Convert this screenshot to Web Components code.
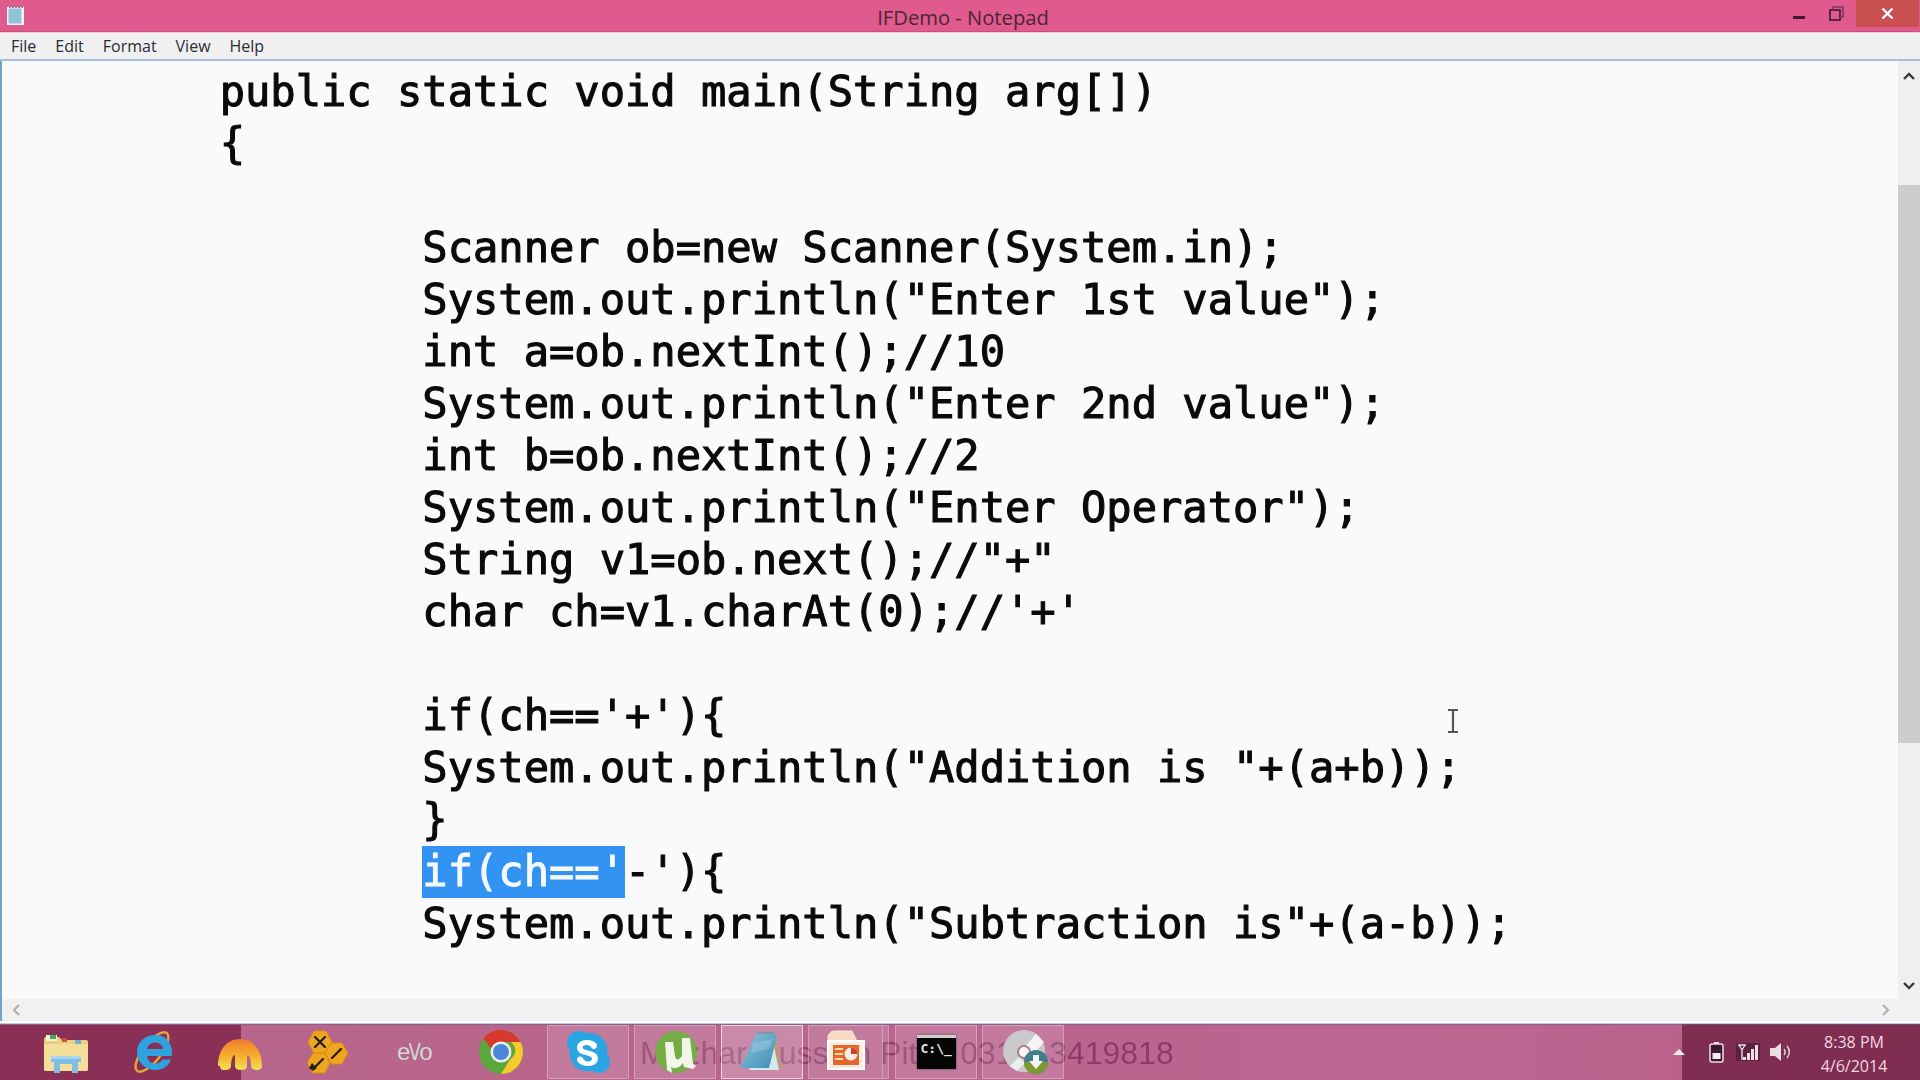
<!DOCTYPE html>
<html><head><meta charset="utf-8"><title>IFDemo - Notepad</title>
<style>
html,body{margin:0;padding:0;width:1920px;height:1080px;overflow:hidden;background:#fafafa}
body{display:flex;flex-direction:column;font-family:"Open Sans","Liberation Sans",sans-serif}
</style></head><body>
<np-window>
  <np-titlebar slot="title">IFDemo - Notepad</np-titlebar>
  <np-menubar slot="menu"><np-menu>File</np-menu><np-menu>Edit</np-menu><np-menu>Format</np-menu><np-menu>View</np-menu><np-menu>Help</np-menu></np-menubar>
  <np-editor slot="editor">
    <code-line indent="1">public static void main(String arg[])</code-line>
    <code-line indent="1">{</code-line>
    <code-line></code-line>
    <code-line indent="2">Scanner ob=new Scanner(System.in);</code-line>
    <code-line indent="2">System.out.println("Enter 1st value");</code-line>
    <code-line indent="2">int a=ob.nextInt();//10</code-line>
    <code-line indent="2">System.out.println("Enter 2nd value");</code-line>
    <code-line indent="2">int b=ob.nextInt();//2</code-line>
    <code-line indent="2">System.out.println("Enter Operator");</code-line>
    <code-line indent="2">String v1=ob.next();//"+"</code-line>
    <code-line indent="2">char ch=v1.charAt(0);//'+'</code-line>
    <code-line></code-line>
    <code-line indent="2">if(ch=='+'){</code-line>
    <code-line indent="2">System.out.println("Addition is "+(a+b));</code-line>
    <code-line indent="2">}</code-line>
    <code-line indent="2"><sel-text>if(ch=='</sel-text>-'){</code-line>
    <code-line indent="2">System.out.println("Subtraction is"+(a-b));</code-line>
  </np-editor>
</np-window>
<np-taskbar>
  <task-btn plain icon="explorer"></task-btn>
  <task-btn plain icon="ie"></task-btn>
  <task-btn plain icon="arch"></task-btn>
  <task-btn plain icon="honey"></task-btn>
  <task-btn plain icon="evo"></task-btn>
  <task-btn plain icon="chrome"></task-btn>
  <task-btn icon="skype"></task-btn>
  <task-btn icon="utorrent"></task-btn>
  <task-btn active icon="notepad"></task-btn>
  <task-btn stacked icon="ppt"></task-btn>
  <task-btn icon="cmd"></task-btn>
  <task-btn icon="disk"></task-btn>
  <np-tray slot="tray"></np-tray>
</np-taskbar>
<script>
const ICONS={
explorer:`<svg width="46" height="46" viewBox="0 0 46 46"><path d="M2 8h14l3 3h24a2 2 0 0 1 2 2v27a2 2 0 0 1-2 2H3a2 2 0 0 1-2-2V10z" fill="#e9cf7e"/><path d="M1 15h44v25a2 2 0 0 1-2 2H3a2 2 0 0 1-2-2z" fill="#f3df9a"/><path d="M3 6h11v6H3z" fill="#f5f0d8"/><rect x="7" y="6" width="6" height="4" fill="#3fae5a"/><rect x="19" y="9" width="5" height="4" fill="#c4553a"/><rect x="32" y="11" width="6" height="4" fill="#6fb2cf"/><path d="M8 27h30v6h-3v11h-6v-9H17v9h-6V33H8z" fill="#7fbde2"/><path d="M8 27h30v3H8z" fill="#a9d6ef"/></svg>`,
ie:`<svg width="46" height="46" viewBox="0 0 46 46"><ellipse cx="22" cy="23" rx="24" ry="9" transform="rotate(-52 22 23)" fill="none" stroke="#dfa83a" stroke-width="2.4"/><path d="M37 27H17c.6 5 4 7.500 8 7.500 3.500 0 6-1.500 7.500-4H41c-2.500 6.500-8.500 10.500-15.500 10.500C15 41 7 33 7 23S15 6 25.500 6 42 14 42 24c0 1-.1 2-.3 3zM17 20h16c-.6-4-3.600-6.500-8-6.500-3.800 0-7 2.500-8 6.500z" fill="#2da4e0" fill-rule="evenodd"/></svg>`,
arch:`<svg width="46" height="46" viewBox="0 0 46 46"><defs><linearGradient id="ag" x1="0" y1="0" x2="0" y2="1"><stop offset="0" stop-color="#ee7a30"/><stop offset=".55" stop-color="#f6b02c"/><stop offset="1" stop-color="#f2e05a"/></linearGradient></defs><path d="M1 37C1 21 10 10 23 10s22 11 22 27c0 2.500-2 4-5 4s-6-1.500-6-4c0-5-1-9-3-11 0 0-1 0-1 2v9c0 2.500-2 4-6 4s-6-1.500-6-4v-9c0-2-1-2-1-2-2 2-3 6-3 11 0 2.500-2 4-6 4s-5-1.500-5-4z" fill="url(#ag)"/></svg>`,
honey:`<svg width="46" height="46" viewBox="0 0 46 46"><g fill="#efa51f" stroke="#d98a14" stroke-width="1"><path d="M10 2h12l6 11-6 11H10L4 13z"/><path d="M27 14h11l6 10-6 11H27l-6-11z"/><path d="M9 24h12l5 10-5 10H9L3 34z"/></g><g stroke="#2b2115" stroke-width="2.400" fill="none" stroke-linecap="round"><path d="M11 8l10 10M21 8L11 18"/><path d="M28 29l9-9"/><path d="M19 30l-7 7"/></g><path d="M8 34l5 5-4 3-4-3z" fill="#2b2115"/></svg>`,
chrome:`<svg width="46" height="46" viewBox="0 0 46 46"><circle cx="23" cy="23" r="22" fill="#5aa83c"/><path d="M23 1a22 22 0 0 1 19.500 12H23a10 10 0 0 0-9.500 7L5.500 9.500A22 22 0 0 1 23 1z" fill="#d8382e"/><path d="M42.500 13A22 22 0 0 1 23 45l9.500-15a10 10 0 0 0 0-17z" fill="#f6c92c"/><circle cx="23" cy="23" r="10.500" fill="#eee"/><circle cx="23" cy="23" r="8" fill="#4b86d8"/></svg>`,
skype:`<svg width="46" height="46" viewBox="-1 0 46 46"><path d="M13 2c3 0 5 1 7 2 8-1 14 2 18 7 3 4 4 9 3 14 2 3 3 5 3 8 0 6-5 11-11 11-3 0-5-1-7-2-8 1-15-1-19-7-3-4-4-9-3-13C2 19 1 17 1 14 1 7 6 2 13 2z" fill="#2aa5e4"/><path d="M32 29c0 6-5 8-10 8-6 0-11-3-11-6.500 0-2 1.500-3 3-3 3.500 0 3 5 8 5 2.500 0 4-1.200 4-2.800 0-4.700-15-2.200-15-11.200 0-5 5-7.500 10-7.500 5.500 0 10 2.500 10 6 0 1.800-1.500 3-3 3-3 0-2.800-4-7.500-4-2.500 0-3.800 1.200-3.800 2.500 0 4 15.300 2 15.300 11z" fill="#fff"/></svg>`,
utorrent:`<svg width="46" height="46" viewBox="-2 0 46 46"><circle cx="22" cy="23" r="21" fill="#74ad44"/><path d="M11 13h8l2 14c.4 3 2 4 4 3 2-1 3-3 3-5V9h8l3 26 3 2-3 3-9-2-1-4c-2 3-5 5-8 5-2 0-3-.5-4-1.500L18 44l-5-3z" fill="#f2f6ea"/></svg>`,
notepad:`<svg width="46" height="46" viewBox="0 0 46 46"><defs><linearGradient id="ng" x1="0" y1="0" x2="1" y2="1"><stop offset="0" stop-color="#8fc6de"/><stop offset="1" stop-color="#3f8db5"/></linearGradient></defs><path d="M36 4l6 36-12 2z" fill="#b89c62"/><path d="M32 3l8 38H10z" fill="#d6e8ee"/><path d="M18 3h16l4 4-8 32H1z" fill="url(#ng)"/><path d="M18 3h16l2 2H17z" fill="#7d9aa8"/><path d="M14 14l20-4-4 10-18 4z" fill="#fff" opacity=".18"/></svg>`,
ppt:`<svg width="46" height="46" viewBox="3 0 46 46"><path d="M8 8c0-3 3-6 6-6h18l4 8v28H8z" fill="#f8d9c2" stroke="#f4e8dc"/><rect x="8" y="12" width="36" height="28" fill="#fbeadf" stroke="#fff" stroke-width="2"/><rect x="13" y="16" width="26" height="20" fill="#e2672b"/><g stroke="#f9d9b2" stroke-width="2"><path d="M15 20h8M15 25h8M15 30h8"/></g><circle cx="31" cy="25" r="6.500" fill="#f5ede3"/><path d="M31 25v-6.500a6.500 6.500 0 0 1 6.500 6.500z" fill="#d0402a"/></svg>`,
disk:`<svg width="46" height="46" viewBox="-3 0 46 46" style="overflow:visible"><circle cx="21" cy="22" r="21" fill="#c9c9c9"/><path d="M33 5l8 8-12 14-8-8z" fill="#f4f4f4"/><path d="M16 28l6 6-8 8-7-5z" fill="#ededed"/><circle cx="21" cy="23" r="6" fill="#f5f5f5" stroke="#ab7f8f" stroke-width="2"/><circle cx="33" cy="33" r="12" fill="#3f7f8a"/><path d="M21 33a12 12 0 0 0 24 0z" fill="#7d9a32"/><path d="M30 26h6v6h4l-7 8-7-8h4z" fill="#f4f4f4"/></svg>`
};
function comp(name,css,html){
  customElements.define(name,class extends HTMLElement{
    constructor(){super();const r=this.attachShadow({mode:'open'});r.innerHTML=`<style>${css}</style>${typeof html==='function'?html(this):html}`;}
  });
}
comp('np-window',`:host{display:flex;flex-direction:column;height:1024px;flex:none}`,`<slot name="title"></slot><slot name="menu"></slot><slot name="editor"></slot>`);
comp('np-titlebar',`:host{display:grid;grid-template-columns:1fr auto 1fr;flex:none;align-items:center;height:32px;box-sizing:border-box;background:#e05a8e;border-bottom:1px solid #c84f7f;padding-left:6px}
.t{text-align:center;font:20.200px "Open Sans",sans-serif;color:#4a2636;margin-top:2px;white-space:pre}
.ctl{display:flex;align-items:flex-start;align-self:stretch;justify-self:end}
.min{width:12px;height:3px;background:#3c1a33;margin:16px 24px 0 0}
.res{margin:6px 12px 0 0;line-height:0}
.close{width:63px;height:27px;background:#c9504f;display:flex;align-items:center;justify-content:center;line-height:0;margin-right:1px}`,
`<div style="line-height:0"><svg width="20" height="20" viewBox="0 0 20 20"><path d="M1 1h17v18H1z" fill="#f3f6f7"/><path d="M2.500 2.500h13v15h-13z" fill="#8fc3d8"/><path d="M3 1.500h14" stroke="#7a8f9a" stroke-dasharray="2 1"/></svg></div>
<div class="t"><slot></slot></div>
<div class="ctl"><div class="min"></div><div class="res"><svg width="15" height="15" viewBox="0 0 15 15" fill="none" stroke="#3c1a33" stroke-width="1.600"><rect x="1" y="4" width="10" height="10"/><path d="M4 4V1h10v10h-3" stroke="#7a3a5c"/></svg></div><div class="close"><svg width="13" height="13" viewBox="0 0 13 13"><path d="M1.500 1.500l10 10M11.500 1.500l-10 10" stroke="#fff" stroke-width="2.400"/></svg></div></div>`);
comp('np-menubar',`:host{display:flex;flex:none;height:29px;box-sizing:border-box;background:#f0f0f0;border-top:1px solid #f3c9da;border-bottom:2px solid #a6bfdf;align-items:center;padding-left:11px;gap:19px;font:16px "Open Sans",sans-serif;color:#2b2b33}`,`<slot></slot>`);
comp('np-menu',`:host{display:block}`,`<slot></slot>`);
comp('np-editor',`:host{display:grid;flex:1;min-height:0;grid-template-columns:1fr 22px;grid-template-rows:1fr 22px 3px;background:#fafafa;position:relative}
.text{border-left:2px solid #73a3c9;padding:5px 0 0 15px;overflow:hidden;font:42.080px/52px "DejaVu Sans Mono",monospace;color:#0a0a0a;-webkit-text-stroke:1.100px #0a0a0a;grid-row:1/3;grid-column:1/2;z-index:0;filter:blur(.35px)}
.v{background:#efefef;grid-row:1;grid-column:2;display:flex;flex-direction:column;align-items:center;padding-top:124px;box-sizing:border-box;position:relative}
.thumb{width:100%;height:558px;background:#cdcdcd;flex:none}
.up,.down{position:absolute;left:5px;line-height:0}.up{top:11px}.down{bottom:9px}
.h{grid-row:2;grid-column:1/3;background:#f1f1f1;display:flex;justify-content:space-between;align-items:center;padding:0 30px 0 10px;z-index:1;margin-left:2px}
.foot{grid-row:3;grid-column:1/3;background:#fbfdff;border-bottom:1px solid #bcc8dc;box-sizing:border-box}
.cursor{position:absolute;left:1448px;top:648px;line-height:0}`,
`<div class="text"><slot></slot></div>
<div class="v"><div class="up"><svg width="12" height="8" viewBox="0 0 12 8" fill="none" stroke="#3a3a3a" stroke-width="2.400"><path d="M1 7l5-5 5 5"/></svg></div><div class="thumb"></div><div class="down"><svg width="12" height="8" viewBox="0 0 12 8" fill="none" stroke="#3a3a3a" stroke-width="2.400"><path d="M1 1l5 5 5-5"/></svg></div></div>
<div class="h"><svg width="8" height="12" viewBox="0 0 8 12" fill="none" stroke="#b0b0b0" stroke-width="2.200"><path d="M7 1L2 6l5 5"/></svg><svg width="8" height="12" viewBox="0 0 8 12" fill="none" stroke="#b0b0b0" stroke-width="2.200"><path d="M1 1l5 5-5 5"/></svg></div>
<div class="foot"></div>
<div class="cursor"><svg width="10" height="24" viewBox="0 0 10 24" fill="none" stroke="#555" stroke-width="2.200"><path d="M0 1h10M0 23h10M5 1v22"/></svg></div>`);
comp('code-line',`:host{display:block;height:52px;white-space:pre}
:host([indent="1"]){padding-left:8ch}
:host([indent="2"]){padding-left:16ch}`,`<slot></slot>`);
comp('sel-text',`:host{display:inline-block;height:52px;background:#3393f3;color:#f6faff;-webkit-text-stroke:.9px #f6faff}`,`<slot></slot>`);
comp('np-taskbar',`:host{display:flex;flex:none;height:56px;background:linear-gradient(90deg,#8a3056 241px,#b8658b 241px,#bb6590 1500px,#ba628c 1682px);position:relative;align-items:stretch;padding-left:25px;gap:5px;box-shadow:inset 0 1px 0 #8e6088;font-family:"Open Sans",sans-serif}
.wm{position:absolute;left:640px;top:7px;font:32px/44px "Liberation Sans",sans-serif;color:#7a2a58;opacity:.7;white-space:pre}
.sp{flex:1}`,
`<div class="wm">Mazhar Hussain Pitafi 0313  3419818</div><slot></slot><div class="sp"></div><slot name="tray"></slot>`);
comp('task-btn',`:host{display:flex;width:82px;flex:none;box-sizing:border-box;align-items:center;justify-content:center;margin:1px 0;position:relative;background:rgba(255,255,255,.14);border:1px solid rgba(255,255,255,.28)}
:host([plain]){background:none;border-color:transparent}
:host([active]){background:rgba(255,255,255,.24);border:1px solid rgba(255,255,255,.62)}
:host([stacked]){width:75px;margin-right:7px}
:host([stacked])::after{content:"";position:absolute;top:-1px;bottom:-1px;right:-7px;width:5px;background:rgba(255,255,255,.14);border:1px solid rgba(255,255,255,.22);border-left:none}
.evo{font:24px "Liberation Sans",sans-serif;color:#dcd4da;letter-spacing:-1.500px;text-shadow:0 0 1px #777;white-space:pre}
.c{width:39px;height:34px;background:#050505;border-top:3px solid #cfcfcf;box-sizing:border-box;color:#e8e8e8;font:bold 13px "DejaVu Sans Mono",monospace;padding:4px 0 0 4px;line-height:14px;white-space:pre;box-shadow:0 0 2px #444}`,
t=>{const n=t.getAttribute('icon');if(n==='evo')return`<span class="evo">e\\/o</span>`;if(n==='cmd')return`<div class="c">C:\\_</div>`;return ICONS[n]});
comp('np-tray',`:host{display:flex;width:238px;flex:none;background:#7f2d50;box-shadow:inset 0 1px 0 #6f4a70;align-items:center;position:relative;color:#f3d7e2}
.a{width:0;height:0;border:6px solid transparent;border-bottom:6px solid #f4e8ee;border-top:0;margin-left:-9px}
.ic{line-height:0;display:flex;align-items:center}
.clock{font:16px/24px "Open Sans",sans-serif;text-align:center;width:72px;margin:4px 0 0 25px}`,
`<div class="a"></div>
<div class="ic" style="margin-left:24px"><svg width="15" height="22" viewBox="0 0 15 22"><rect x="1" y="3" width="13" height="18" rx="2" fill="#3a1a2c" stroke="#f1dde6" stroke-width="1.500"/><rect x="5" y="1" width="5" height="2" fill="#f1dde6"/><rect x="3.500" y="12" width="8" height="6" fill="#f7edf2"/></svg></div>
<div class="ic" style="margin-left:12px"><svg width="24" height="18" viewBox="0 0 24 18"><rect width="24" height="18" fill="#4d1d34" opacity=".7"/><path d="M2 2h8M3 2l3 5 3-5M6 7v10" stroke="#ecdde4" stroke-width="1.400" fill="none"/><g fill="#ecdde4"><rect x="7" y="14" width="3" height="3"/><rect x="11" y="10" width="3" height="7"/><rect x="15" y="6" width="3" height="11"/><rect x="19" y="2" width="3" height="15"/></g></svg></div>
<div class="ic" style="margin-left:9px"><svg width="24" height="20" viewBox="0 0 24 20"><path d="M1 6h5l6-5v18l-6-5H1z" fill="#e8dfe3"/><path d="M15 7c1.500 2 1.500 4 0 6M18 4c3 3.500 3 8.500 0 12" stroke="#e8dfe3" stroke-width="1.400" fill="none"/></svg></div>
<div class="clock">8:38 PM<br>4/6/2014</div>`);
</script>
</body></html>
